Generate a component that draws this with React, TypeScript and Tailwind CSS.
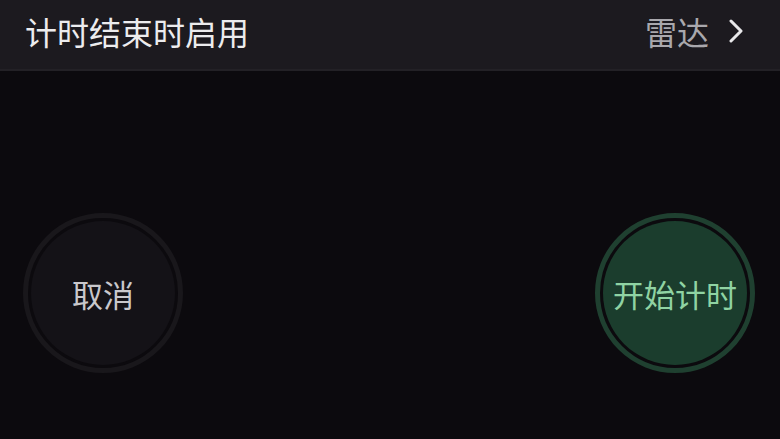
import React from 'react';

const font = "font-['Noto_Sans_CJK_SC','Noto_Sans',sans-serif]";

const App: React.FC = () => {
    return (
        <div className={`w-[780px] h-[439px] bg-[#0c0a0e] flex flex-col overflow-hidden ${font}`}>
            <header className="h-[71px] bg-[#1c1a1f] border-b-2 border-[#232126] flex items-center justify-between pl-[25px] pr-[36px] pb-[8px] flex-shrink-0">
                <span className="text-[32px] text-[#ececee] leading-none">计时结束时启用</span>
                <div className="flex items-center gap-[19px]">
                    <span className="text-[32px] text-[#a9a8ad] leading-none">雷达</span>
                    <svg width="16" height="24" viewBox="0 0 16 24" fill="none">
                        <path d="M3 2 L13 12 L3 22" stroke="#e8e8ea" strokeWidth="3" strokeLinecap="round" strokeLinejoin="round" />
                    </svg>
                </div>
            </header>
            <div className="flex justify-between pl-[23px] pr-[25px] pt-[142px]">
                <button className="w-[160px] h-[160px] rounded-full border-[5px] border-[#19171b] p-[3px]">
                    <div className="w-full h-full rounded-full bg-[#141217] flex items-center justify-center">
                        <span className="text-[31px] text-[#c9c8cc] leading-none">取消</span>
                    </div>
                </button>
                <button className="w-[160px] h-[160px] rounded-full border-[5px] border-[#1f4030] p-[3px]">
                    <div className="w-full h-full rounded-full bg-[#1b3d2d] flex items-center justify-center">
                        <span className="text-[31px] text-[#8fd3a3] leading-none">开始计时</span>
                    </div>
                </button>
            </div>
        </div>
    );
};

export default App;
